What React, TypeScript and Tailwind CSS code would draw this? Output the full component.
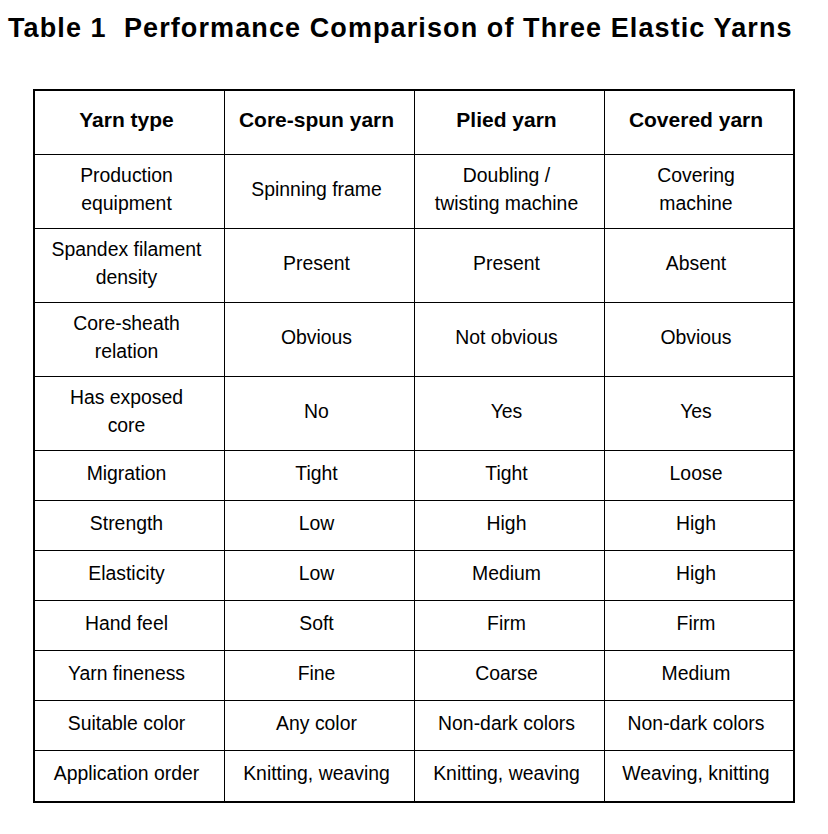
const HEAD = ["Yarn type", "Core-spun yarn", "Plied yarn", "Covered yarn"];

const ROWS: { cells: string[][]; tall: boolean }[] = [
  { tall: true, cells: [["Production", "equipment"], ["Spinning frame"], ["Doubling /", "twisting machine"], ["Covering", "machine"]] },
  { tall: true, cells: [["Spandex filament", "density"], ["Present"], ["Present"], ["Absent"]] },
  { tall: true, cells: [["Core-sheath", "relation"], ["Obvious"], ["Not obvious"], ["Obvious"]] },
  { tall: true, cells: [["Has exposed", "core"], ["No"], ["Yes"], ["Yes"]] },
  { tall: false, cells: [["Migration"], ["Tight"], ["Tight"], ["Loose"]] },
  { tall: false, cells: [["Strength"], ["Low"], ["High"], ["High"]] },
  { tall: false, cells: [["Elasticity"], ["Low"], ["Medium"], ["High"]] },
  { tall: false, cells: [["Hand feel"], ["Soft"], ["Firm"], ["Firm"]] },
  { tall: false, cells: [["Yarn fineness"], ["Fine"], ["Coarse"], ["Medium"]] },
  { tall: false, cells: [["Suitable color"], ["Any color"], ["Non-dark colors"], ["Non-dark colors"]] },
  { tall: false, cells: [["Application order"], ["Knitting, weaving"], ["Knitting, weaving"], ["Weaving, knitting"]] },
];

export default function App() {
  return (
    <div className="w-[828px] h-[834px] bg-white text-black font-['Liberation_Sans',Arial,sans-serif]">
      <div className="pl-[8px] pt-[12px] text-[27px] leading-[32px] font-bold tracking-[1.1px] whitespace-nowrap">
        Table 1&nbsp; Performance Comparison of Three Elastic Yarns
      </div>

      <div className="ml-[33px] mt-[45px] w-[762px] border-2 border-black grid grid-cols-[190px_190px_190px_188px] text-[19.4px] leading-[28px]">
        {HEAD.map((h, i) => (
          <div
            key={h}
            className={`h-[64px] pb-[6px] pr-[6px] flex items-center justify-center text-[21px] font-bold border-b border-black ${i < 3 ? "border-r" : ""}`}
          >
            {h}
          </div>
        ))}
        {ROWS.map((row, r) =>
          row.cells.map((lines, i) => (
            <div
              key={`${r}-${i}`}
              className={`${row.tall ? "h-[74px]" : "h-[50px]"} pb-[6px] pr-[6px] flex flex-col items-center justify-center text-center border-black ${i < 3 ? "border-r" : ""} ${r < ROWS.length - 1 ? "border-b" : ""}`}
            >
              {lines.map((l) => (
                <span key={l} className="whitespace-nowrap">{l}</span>
              ))}
            </div>
          ))
        )}
      </div>
    </div>
  );
}
